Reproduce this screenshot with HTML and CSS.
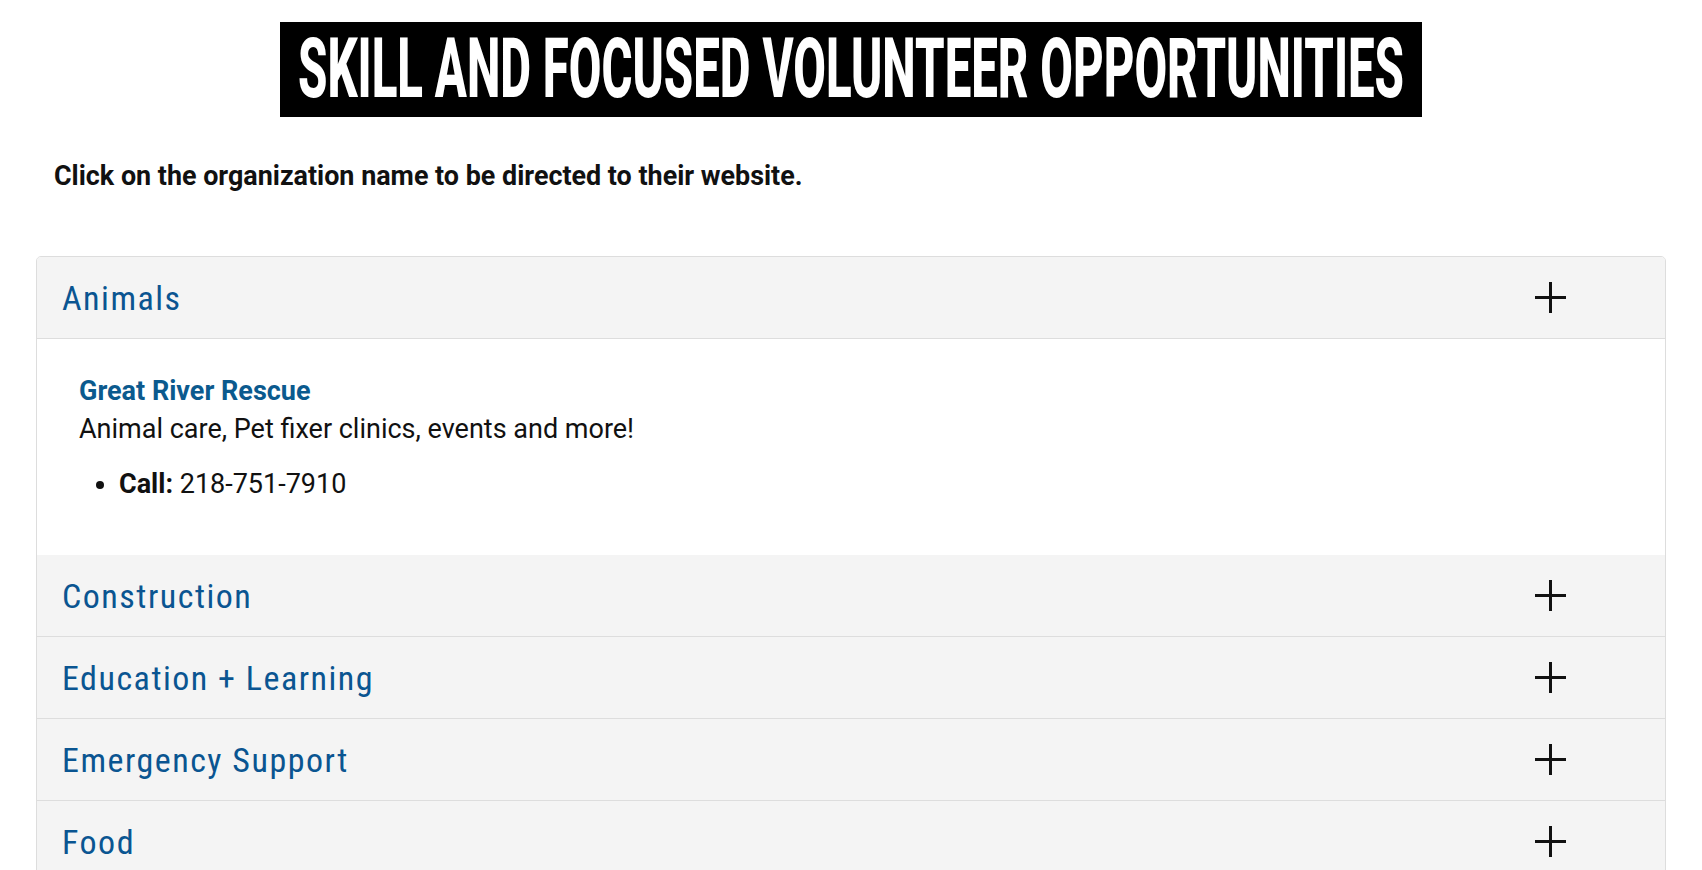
FILE: index.html
```html
<!DOCTYPE html>
<html lang="en">
<head>
<meta charset="utf-8">
<title>Skill and Focused Volunteer Opportunities</title>
<link rel="stylesheet" href="styles.css">
</head>
<body>
<header class="title-wrap">
  <h1 class="title"><span class="title-text">SKILL AND FOCUSED VOLUNTEER OPPORTUNITIES</span></h1>
</header>
<p class="intro">Click on the organization name to be directed to their website.</p>
<section class="accordion">
  <div class="item open">
    <div class="item-head">
      <span class="item-title">Animals</span>
      <svg class="plus" width="31" height="31" viewBox="0 0 31 31"><path d="M15.5 0V31M0 15.5H31" stroke="#111" stroke-width="3"/></svg>
    </div>
    <div class="item-body">
      <a class="org" href="#">Great River Rescue</a>
      <p class="desc">Animal care, Pet fixer clinics, events and more!</p>
      <ul class="contacts">
        <li><strong>Call:</strong> 218-751-7910</li>
      </ul>
    </div>
  </div>
  <div class="item">
    <div class="item-head">
      <span class="item-title">Construction</span>
      <svg class="plus" width="31" height="31" viewBox="0 0 31 31"><path d="M15.5 0V31M0 15.5H31" stroke="#111" stroke-width="3"/></svg>
    </div>
  </div>
  <div class="item">
    <div class="item-head">
      <span class="item-title">Education + Learning</span>
      <svg class="plus" width="31" height="31" viewBox="0 0 31 31"><path d="M15.5 0V31M0 15.5H31" stroke="#111" stroke-width="3"/></svg>
    </div>
  </div>
  <div class="item">
    <div class="item-head">
      <span class="item-title">Emergency Support</span>
      <svg class="plus" width="31" height="31" viewBox="0 0 31 31"><path d="M15.5 0V31M0 15.5H31" stroke="#111" stroke-width="3"/></svg>
    </div>
  </div>
  <div class="item">
    <div class="item-head">
      <span class="item-title">Food</span>
      <svg class="plus" width="31" height="31" viewBox="0 0 31 31"><path d="M15.5 0V31M0 15.5H31" stroke="#111" stroke-width="3"/></svg>
    </div>
  </div>
</section>
</body>
</html>
```

FILE: styles.css
```css
* { box-sizing: border-box; }

body {
  margin: 0;
  background: #fff;
  color: #111;
  font-family: Roboto, "Noto Sans", Arial, sans-serif;
}

.title-wrap {
  display: flex;
  justify-content: center;
  padding-top: 22px;
}

.title {
  margin: 0;
  width: 1142px;
  height: 95px;
  background: #000;
  display: flex;
  justify-content: center;
  align-items: center;
}

.title-text {
  display: inline-block;
  flex: none;
  color: #fff;
  font-family: Roboto, sans-serif;
  font-weight: 800;
  font-size: 47.4px;
  line-height: 1;
  white-space: nowrap;
  transform: scaleY(1.77);
  transform-origin: center;
}

.intro {
  margin: 44px 0 0 54px;
  font-size: 26.9px;
  font-weight: 700;
  line-height: 30px;
  color: #111;
}

.accordion {
  margin: 65px 36px 0 36px;
  border: 1px solid #ddd;
  border-radius: 5px;
  overflow: hidden;
}

.item-head {
  height: 82px;
  background: #f4f4f4;
  border-bottom: 1px solid #ddd;
  display: flex;
  align-items: center;
  justify-content: space-between;
  padding: 0 99px 0 25px;
}

.item-title {
  font-family: Roboto, sans-serif;
  font-stretch: 80%;
  font-size: 34px;
  line-height: 34px;
  letter-spacing: 1.5px;
  color: #0a5591;
}

.plus { display: block; }

.item-body {
  background: #fff;
  padding: 33px 42px 52px 42px;
  font-size: 27px;
  line-height: 38px;
}

.org {
  display: block;
  color: #0b5a8e;
  font-weight: 700;
  text-decoration: none;
}

.desc {
  margin: 0;
  color: #111;
}

.contacts {
  margin: 17px 0 0 0;
  padding-left: 40px;
}
```
